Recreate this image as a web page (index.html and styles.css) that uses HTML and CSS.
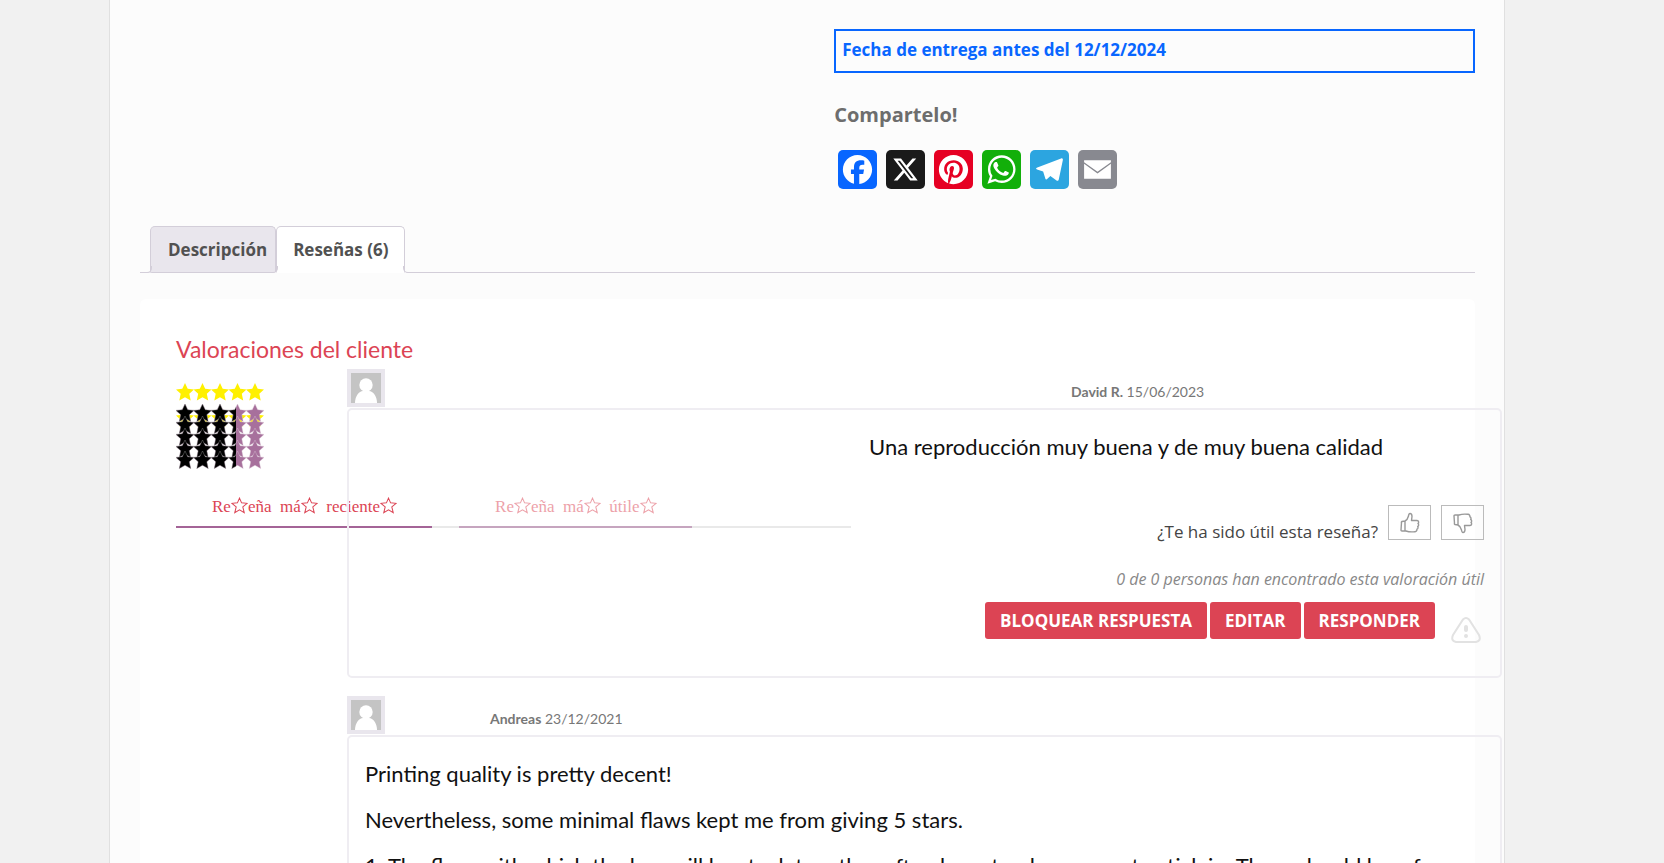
FILE: index.html
```
<!DOCTYPE html>
<html lang="es">
<head>
    <meta charset="UTF-8">
    <meta name="viewport" content="width=device-width, initial-scale=1.0">
    <title>Reseñas</title>
    <link rel="stylesheet" href="styles.css">
</head>
<body>
    <!-- Iconos reutilizables -->
    <svg class="sprite" width="0" height="0">
        <symbol id="star" viewBox="0 0 18 18"><path d="M9 0l2.700 5.700 6.300.7-4.700 4.300L14.700 17.500 9 14.300 3.300 17.500l1.400-6.800L0 6.400l6.300-.7z"/></symbol>
        <symbol id="star-row" viewBox="0 0 88 18">
            <use href="#star" x="0" width="18" height="18"/>
            <use href="#star" x="17.500" width="18" height="18"/>
            <use href="#star" x="35" width="18" height="18"/>
            <use href="#star" x="52.500" width="18" height="18"/>
            <use href="#star" x="70" width="18" height="18"/>
        </symbol>
        <symbol id="star-line" viewBox="0 0 18 18"><path fill="none" stroke="currentColor" stroke-width="1.100" d="M9 1.200l2.200 5 5.800.5-4.500 3.800 1.500 6L9 13.500l-5 3 1.500-6L1 6.700l5.800-.5z"/></symbol>
        <symbol id="avatar" viewBox="0 0 30 30"><path fill="#c4c4c4" d="M0 0h30v30H0z"/><circle cx="15" cy="12" r="6.700" fill="#fff"/><path fill="#fff" d="M4 30c0-7 4-12 8-12h6c4 0 8 5 8 12z"/></symbol>
        <symbol id="thumb" viewBox="0 0 20 22"><path fill="none" stroke="#999" stroke-width="1.400" stroke-linejoin="round" d="M1.500 10.500Q1 10 2 9.500L5 9c2-1 3-3 3.500-5 .2-1.500.6-2.500 1.500-2.500 1.500 0 2 1.500 2 3L11.500 8.500h5.500c2 0 2 2.500 1 3 1 1 .8 2.500-.3 3 .6 1 .3 2.300-.8 2.700.2 1.300-.5 2.300-1.900 2.500-4 .5-7 0-9-.7H2q-1 0-1-1zM5 9.500v9.500"/></symbol>
    </svg>

    <main class="page">
        <section class="purchase">
            <p class="delivery">Fecha de entrega antes del 12/12/2024</p>
            <h4 class="share-title">Compartelo!</h4>
            <div class="share">
                <a href="#" class="share-link facebook" aria-label="Facebook"><svg viewBox="0 0 32 32"><path fill="#fff" d="M28 16c0-6.627-5.373-12-12-12S4 9.373 4 16c0 5.628 3.875 10.350 9.101 11.647v-7.980h-2.474V16H13.100v-1.580c0-4.085 1.849-5.978 5.859-5.978.76 0 2.072.15 2.608.298v3.325c-.283-.030-.775-.045-1.386-.045-1.967 0-2.728.745-2.728 2.683V16h3.920l-.673 3.667h-3.247v8.245C23.395 27.195 28 22.135 28 16"/></svg></a>
                <a href="#" class="share-link x" aria-label="X"><svg viewBox="0 0 32 32"><path fill="#fff" d="M21.751 7h3.067l-6.700 7.658L26 25.078h-6.172l-4.833-6.320-5.531 6.320h-3.070l7.167-8.190L6 7h6.328l4.370 5.777L21.751 7zm-1.076 16.242h1.700L11.404 8.740H9.580l11.094 14.503z"/></svg></a>
                <a href="#" class="share-link pinterest" aria-label="Pinterest"><svg viewBox="0 0 32 32"><path fill="#fff" d="M16 4C9.370 4 4 9.370 4 16c0 5.080 3.160 9.430 7.630 11.180-.1-.95-.2-2.410.04-3.450.22-.94 1.410-5.970 1.410-5.970s-.36-.72-.36-1.780c0-1.670.97-2.920 2.170-2.920 1.030 0 1.520.77 1.520 1.690 0 1.030-.66 2.570-1 4-.28 1.200.6 2.170 1.780 2.170 2.130 0 3.770-2.250 3.770-5.500 0-2.870-2.060-4.880-5.010-4.880-3.420 0-5.420 2.560-5.420 5.210 0 1.030.4 2.140.89 2.740.1.120.11.220.08.340l-.33 1.360c-.05.22-.17.270-.4.160-1.500-.7-2.440-2.890-2.440-4.650 0-3.780 2.750-7.260 7.920-7.260 4.160 0 7.390 2.960 7.390 6.930 0 4.130-2.610 7.460-6.220 7.460-1.210 0-2.360-.63-2.750-1.380l-.75 2.850c-.27 1.040-1 2.350-1.490 3.150C13.560 27.810 14.760 28 16 28c6.630 0 12-5.370 12-12S22.630 4 16 4"/></svg></a>
                <a href="#" class="share-link whatsapp" aria-label="WhatsApp"><svg viewBox="0 0 32 32"><path fill="#fff" fill-rule="evenodd" d="M16.210 4.410C9.973 4.410 4.917 9.465 4.917 15.700c0 2.134.592 4.130 1.620 5.832L4.500 27.590l6.250-2.002a11.240 11.240 0 0 0 5.460 1.404c6.234 0 11.290-5.055 11.290-11.290 0-6.237-5.056-11.292-11.290-11.292m0 20.690c-1.910 0-3.690-.57-5.173-1.553l-3.610 1.156 1.173-3.490a9.350 9.350 0 0 1-1.790-5.512c0-5.180 4.217-9.400 9.400-9.400s9.397 4.220 9.397 9.400c0 5.188-4.214 9.400-9.398 9.400z"/><path fill="#fff" d="M21.500 18.200l-2-1c-.4-.1-.6-.1-.9.300l-.9 1.100c-.2.200-.4.300-.7.100-2-.8-3.400-2-4.500-4-.2-.3 0-.5.200-.7l.7-.9c.1-.2.100-.4 0-.6l-.9-2.100c-.3-.6-.5-.6-.9-.6-.8 0-1.100.2-1.500.7-1.100 1.200-1 2.900-.1 4.400 1.700 2.900 4 5 7.100 6 2 .6 3.900.2 4.700-1.400.2-.5.300-1 .2-1.100z"/></svg></a>
                <a href="#" class="share-link telegram" aria-label="Telegram"><svg viewBox="0 0 32 32"><path fill="#fff" d="M25.515 6.896 6.027 14.410c-1.330.534-1.322 1.276-.243 1.606l5 1.560 1.720 5.660c.226.625.115.873.770.873.506 0 .73-.235 1.012-.51l2.430-2.363 5.056 3.734c.930.514 1.602.250 1.834-.863l3.320-15.638c.338-1.363-.520-1.980-1.410-1.577z"/></svg></a>
                <a href="#" class="share-link email" aria-label="Email"><svg viewBox="0 0 32 32"><path fill="#fff" d="M27 21.500v2H5V11.300l11 8 11-8zM5 8.500h22v1.600L16 17.800 5 10.100z"/></svg></a>
            </div>
        </section>

        <nav class="tabs">
            <a href="#" class="tab">Descripción</a>
            <a href="#" class="tab active">Reseñas (6)</a>
        </nav>

        <section class="panel">
            <h2 class="panel-title">Valoraciones del cliente</h2>
            <div class="reviews">
                <div class="summary">
                    <svg class="stars" width="88" height="87" viewBox="0 0 88 87" role="img" aria-label="Valoración">
                        <clipPath id="filled"><rect width="60" height="87"/></clipPath>
                        <g fill="#fff000"><use href="#star-row" width="88" height="18"/><use href="#star-row" y="26" width="88" height="18"/></g>
                        <g class="grid-base">
                            <use href="#star-row" y="21" width="88" height="18"/>
                            <use href="#star-row" y="33" width="88" height="18"/>
                            <use href="#star-row" y="45" width="88" height="18"/>
                            <use href="#star-row" y="57" width="88" height="18"/>
                            <use href="#star-row" y="68" width="88" height="18"/>
                        </g>
                        <g class="grid-filled" clip-path="url(#filled)">
                            <use href="#star-row" y="21" width="88" height="18"/>
                            <use href="#star-row" y="33" width="88" height="18"/>
                            <use href="#star-row" y="45" width="88" height="18"/>
                            <use href="#star-row" y="57" width="88" height="18"/>
                            <use href="#star-row" y="68" width="88" height="18"/>
                        </g>
                    </svg>
                    <div class="sorting">
                        <a href="#" class="sort selected">Re<svg><use href="#star-line"/></svg>eña&nbsp; má<svg><use href="#star-line"/></svg>&nbsp; reciente<svg><use href="#star-line"/></svg></a>
                        <a href="#" class="sort">Re<svg><use href="#star-line"/></svg>eña&nbsp; má<svg><use href="#star-line"/></svg>&nbsp; útile<svg><use href="#star-line"/></svg></a>
                    </div>
                </div>

                <div class="review-list">
                    <article class="review">
                        <header class="review-head first">
                            <svg class="avatar"><use href="#avatar"/></svg>
                            <p class="author"><strong>David R.</strong> 15/06/2023</p>
                        </header>
                        <div class="card">
                            <p class="comment short">Una reproducción muy buena y de muy buena calidad</p>
                            <div class="helpful">
                                <span class="question">¿Te ha sido útil esta reseña?</span>
                                <button class="vote" aria-label="Sí"><svg><use href="#thumb"/></svg></button>
                                <button class="vote down" aria-label="No"><svg><use href="#thumb"/></svg></button>
                            </div>
                            <p class="votes">0 de 0 personas han encontrado esta valoración útil</p>
                            <div class="actions">
                                <button class="action">BLOQUEAR RESPUESTA</button>
                                <button class="action">EDITAR</button>
                                <button class="action">RESPONDER</button>
                                <button class="report" aria-label="Reportar"><svg viewBox="0 0 30 26"><path fill="none" stroke="#e2e2e2" stroke-width="2" d="M12 2.500q3-3 6 0l10 15.500q2.500 6-3 7H5q-5.500-1-3-7z"/><path fill="none" stroke="#e2e2e2" stroke-width="4" stroke-linecap="round" d="M15 10v3M15 19v.1"/></svg></button>
                            </div>
                        </div>
                    </article>

                    <article class="review">
                        <header class="review-head">
                            <svg class="avatar"><use href="#avatar"/></svg>
                            <p class="author"><strong>Andreas</strong> 23/12/2021</p>
                        </header>
                        <div class="card">
                            <p class="comment">Printing quality is pretty decent!</p>
                            <p class="comment">Nevertheless, some minimal flaws kept me from giving 5 stars.</p>
                            <p class="comment">1. The flaps with which the box will be stuck together often have too less space to stick in. There should be a few</p>
                        </div>
                    </article>
                </div>
            </div>
        </section>
    </main>
</body>
</html>
```
FILE: styles.css
```
* {
    box-sizing: border-box;
}
body {
    margin: 0;
    height: 100vh;
    overflow: hidden;
    background-color: #f1f1f1;
    font-family: 'Open Sans', sans-serif;
    color: #444;
}
p, h2, h4 {
    margin: 0;
}
a {
    text-decoration: none;
}
.sprite {
    position: absolute;
}
.page {
    margin: 0 159px 0 109px;
    padding: 29px 29px 0 30px;
    min-height: 100vh;
    background-color: #fcfcfc;
    border: 1px solid #e0e0e0;
    border-width: 0 1px;
}

/* Entrega y compartir */
.purchase {
    width: 48%;
    margin-left: auto;
}
.delivery {
    height: 44px;
    padding: 0 6px;
    border: 2px solid #0866ff;
    color: #0866ff;
    font-size: 17px;
    font-weight: 700;
    line-height: 38px;
}
.share-title {
    margin-top: 29px;
    color: #6d6d6d;
    font-size: 20px;
    line-height: 26px;
}
.share {
    display: flex;
    gap: 9px;
    margin-top: 22px;
    padding-left: 4px;
}
.share-link {
    width: 39px;
    height: 39px;
    border-radius: 5px;
}
.share-link svg {
    display: block;
    width: 39px;
    height: 39px;
}
.facebook { background-color: #0866ff; }
.x { background-color: #1a1a1a; }
.pinterest { background-color: #e60023; }
.whatsapp { background-color: #12af0a; }
.telegram { background-color: #2ca5e0; }
.email { background-color: #888990; }

/* Pestañas */
.tabs {
    display: flex;
    margin-top: 37px;
    padding-left: 10px;
    border-bottom: 1px solid #d3ced9;
}
.tab {
    position: relative;
    height: 46px;
    padding: 0 8px 0 17px;
    border: 1px solid #d3ced9;
    border-bottom: 0;
    border-radius: 5px 5px 0 0;
    background-color: #e9e6ed;
    color: #515151;
    font-size: 17px;
    font-weight: 700;
    line-height: 46px;
}
.tab.active {
    margin-bottom: -1px;
    padding: 0 16px;
    height: 47px;
    background-color: #fff;
}
/* Curvas inferiores de las pestañas */
.tab::before,
.tab.active::after {
    content: '';
    position: absolute;
    bottom: -1px;
    left: -6px;
    width: 6px;
    height: 6px;
    border: 1px solid #d3ced9;
    border-width: 0 1px 1px 0;
    border-bottom-right-radius: 5px;
    box-shadow: 2px 0 0 #e9e6ed;
}
.tab.active::before {
    bottom: 0;
    box-shadow: 2px 0 0 #fff;
}
.tab.active::after {
    bottom: 0;
    left: auto;
    right: -6px;
    border-width: 0 0 1px 1px;
    border-radius: 0 0 0 5px;
    box-shadow: -2px 0 0 #fff;
}

/* Panel de reseñas */
.panel {
    margin-top: 26px;
    padding: 36px 0 0 36px;
    min-height: 600px;
    border-radius: 6px;
    background-color: #fff;
}
.panel-title {
    color: #dc4454;
    font-family: Lato, sans-serif;
    font-size: 23px;
    font-weight: 400;
    line-height: 28px;
}
.reviews {
    display: grid;
    grid-template-columns: 171px minmax(0, 1fr);
    margin-top: 6px;
}
.summary {
    padding-top: 14px;
}
.stars {
    display: block;
}
.grid-base {
    fill: #a7709c;
    stroke: #d8c4d4;
    stroke-width: .4px;
}
.grid-filled {
    fill: #000;
    stroke: #999;
    stroke-width: .4px;
}
.sorting {
    display: flex;
    gap: 27px;
    width: 675px;
    margin-top: 23px;
    border-bottom: 2px solid #e9e9e9;
}
.sort {
    margin-bottom: -2px;
    padding: 0 35px 0 36px;
    height: 35px;
    border-bottom: 2px solid #a46497;
    color: #dc4454;
    font-family: 'Liberation Serif', serif;
    font-size: 17px;
    line-height: 28px;
    white-space: nowrap;
    opacity: .5;
}
.sort.selected {
    opacity: 1;
}
.sort svg {
    width: 17px;
    height: 17px;
    vertical-align: -2px;
}
.review-list {
    margin-right: -27px;
}
.review {
    margin-bottom: 18px;
}
.review-head {
    display: flex;
    height: 39px;
}
.avatar {
    width: 38px;
    height: 38px;
    padding: 4px;
    background-color: #e9e6ed;
}
.author {
    margin-left: 105px;
    color: #777;
    font-family: Lato, sans-serif;
    font-size: 14px;
    line-height: 46px;
}
.first .author {
    margin-left: 686px;
}
.card {
    padding: 22px 16px 33px;
    border: 2px solid #efedf2;
    border-radius: 5px;
}
.comment {
    margin-bottom: 16px;
    color: #111;
    font-family: Lato, sans-serif;
    font-size: 22px;
    line-height: 30px;
    white-space: nowrap;
}
.comment.short {
    margin-right: 101px;
    text-align: right;
}
.helpful {
    display: flex;
    justify-content: flex-end;
    gap: 10px;
    margin-top: 43px;
}
.question {
    font-size: 17px;
    line-height: 54px;
}
.vote {
    width: 43px;
    height: 35px;
    padding: 0;
    border: 1px solid #bbb;
    background: none;
}
.vote svg {
    display: block;
    width: 20px;
    height: 22px;
    margin: 0 auto;
}
.vote.down svg {
    transform: scaleY(-1);
}
.votes {
    margin-top: 6px;
    color: #888;
    font-size: 16px;
    font-style: italic;
    line-height: 28px;
    text-align: right;
}
.actions {
    display: flex;
    justify-content: flex-end;
    gap: 3px;
    margin-top: 9px;
    padding-right: 3px;
}
.action {
    height: 37px;
    padding: 0 15px;
    border: 0;
    border-radius: 3px;
    background-color: #dc4454;
    color: #fff;
    font-family: 'Open Sans', sans-serif;
    font-size: 17px;
    font-weight: 700;
}
.report {
    width: 30px;
    height: 41px;
    margin-left: 13px;
    padding: 14px 0 0;
    border: 0;
    background: none;
}
.report svg {
    display: block;
}
```
